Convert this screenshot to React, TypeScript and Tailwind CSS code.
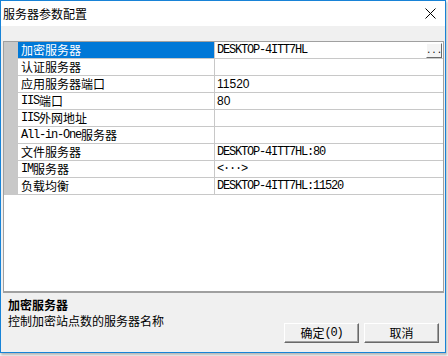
import React from "react";

const CJK = "'Noto Sans CJK SC', 'Noto Sans', sans-serif";
const MONO = "'Liberation Mono', 'DejaVu Sans Mono', monospace";

interface Row {
  name: string;
  value: string;
  kind?: "mono" | "sans";
}

const ROWS: Row[] = [
  { name: "加密服务器", value: "DESKTOP-4ITT7HL", kind: "mono" },
  { name: "认证服务器", value: "" },
  { name: "应用服务器端口", value: "11520", kind: "sans" },
  { name: "IIS端口", value: "80", kind: "sans" },
  { name: "IIS外网地址", value: "" },
  { name: "All-in-One服务器", value: "" },
  { name: "文件服务器", value: "DESKTOP-4ITT7HL:80", kind: "mono" },
  { name: "IM服务器", value: "<···>", kind: "mono" },
  { name: "负载均衡", value: "DESKTOP-4ITT7HL:11520", kind: "mono" },
];

// mixed text: ascii in a narrow mono face, the rest in the CJK face
function Mixed({ text }: { text: string }) {
  const parts = text.match(/[\x20-\x7e]+|[^\x20-\x7e]+/g) || [];
  return (
    <>
      {parts.map((p, i) =>
        /^[\x20-\x7e]+$/.test(p) ? (
          <span key={i} className="text-[12px] tracking-[-1.2px]" style={{ fontFamily: MONO }}>
            {p}
          </span>
        ) : (
          <span key={i} className="text-[12px]" style={{ fontFamily: CJK }}>
            {p}
          </span>
        )
      )}
    </>
  );
}

function GridRow({ row, selected }: { row: Row; selected: boolean }) {
  return (
    <div className="flex h-[17px]">
      <div className="w-[14px] shrink-0 bg-[#c8c8c8]" />
      <div
        className={`w-[197px] shrink-0 flex items-center pl-[3px] border-r border-b border-[#c8c8c8] leading-none ${
          selected ? "bg-[#0078d7] text-white" : "bg-white text-black"
        }`}
      >
        <Mixed text={row.name} />
      </div>
      <div className="flex-1 flex items-center pl-[2px] border-b border-[#c8c8c8] bg-white text-black leading-none">
        {row.kind === "sans" ? (
          <span className="text-[12px]" style={{ fontFamily: "'Liberation Sans', Arial, sans-serif" }}>
            {row.value}
          </span>
        ) : (
          <span className="text-[12px] tracking-[-1.2px]" style={{ fontFamily: MONO }}>
            {row.value}
          </span>
        )}
        {selected && (
          <div className="ml-auto mr-[1px] w-[16px] h-[15px] bg-[#f4f4f4] border-t border-l border-white border-r border-b border-r-[#696969] border-b-[#696969] flex items-end justify-center pb-[1px]">
            <span className="text-[9px] leading-none text-black" style={{ fontFamily: MONO }}>
              ...
            </span>
          </div>
        )}
      </div>
    </div>
  );
}

function Button({ label }: { label: string }) {
  return (
    <button className="w-[75px] h-[20px] bg-[#f0f0f0] border border-t-white border-l-white border-r-[#696969] border-b-[#696969] shadow-[inset_-1px_-1px_0_#a0a0a0] flex items-center justify-center text-[12px] text-black leading-none">
      <Mixed text={label} />
    </button>
  );
}

export default function App() {
  return (
    <div className="w-[448px] h-[356px] bg-[#f5f5f5] overflow-hidden">
      <div className="w-[446px] h-[353px] border border-[#1883d7] bg-[#f0f0f0] flex flex-col shadow-[1px_2px_2px_rgba(0,0,0,0.25)]">
        {/* title bar */}
        <div className="h-[25px] bg-white flex items-center pl-[2px] pr-[9px] shrink-0">
          <span className="text-[12px] text-black" style={{ fontFamily: CJK }}>
            服务器参数配置
          </span>
          <svg className="ml-auto" width="11" height="11" viewBox="0 0 11 11">
            <path d="M0.5 0.5 L10.5 10.5 M10.5 0.5 L0.5 10.5" stroke="#000" strokeWidth="1" />
          </svg>
        </div>

        {/* property grid */}
        <div className="mt-[15px] ml-[2px] mr-[1px] h-[251px] border border-[#a0a0a0] bg-white flex flex-col shrink-0">
          {ROWS.map((r, i) => (
            <GridRow key={r.name} row={r} selected={i === 0} />
          ))}
        </div>

        {/* description + buttons */}
        <div className="flex-1 border-t border-[#a0a0a0] ml-[2px] mr-[1px] flex">
          <div className="flex-1 pl-[5px] pt-[4px] text-black leading-[16px]" style={{ fontFamily: CJK }}>
            <div className="text-[12px] font-bold">加密服务器</div>
            <div className="text-[12px]">控制加密站点数的服务器名称</div>
          </div>
          <div className="flex gap-[5px] items-start pt-[30px] pr-[5px]">
            <Button label="确定(0)" />
            <Button label="取消" />
          </div>
        </div>
      </div>
    </div>
  );
}
